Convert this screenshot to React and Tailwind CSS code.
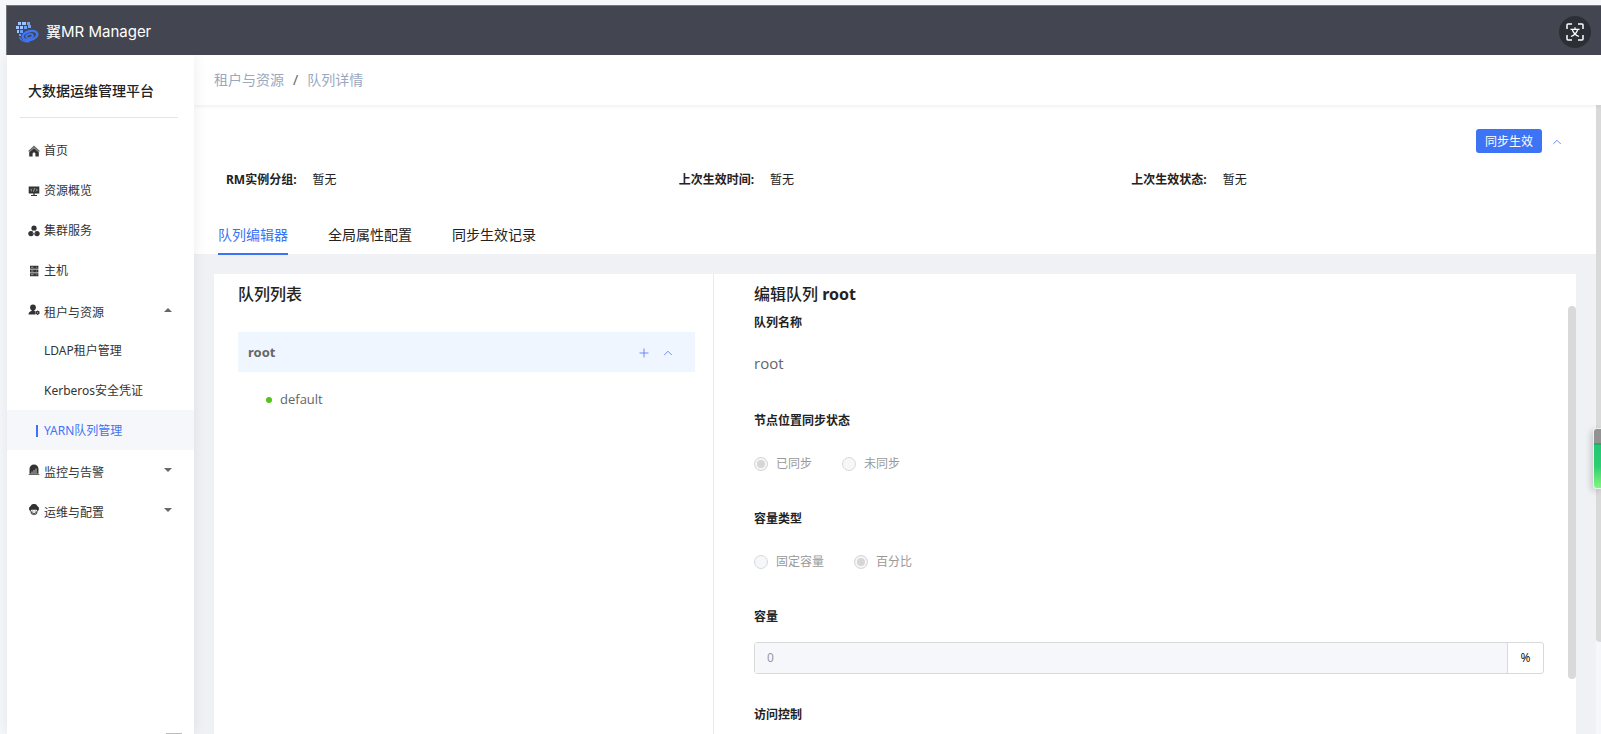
import { ChevronUp, Plus } from "lucide-react";

const navTop = [
  { label: "首页", icon: "home" },
  { label: "资源概览", icon: "monitor" },
  { label: "集群服务", icon: "cluster" },
  { label: "主机", icon: "host" },
];

const tenantItems = [
  { label: "LDAP租户管理" },
  { label: "Kerberos安全凭证" },
  { label: "YARN队列管理", active: true },
];

function NavIcon({ name }) {
  return (
    <svg viewBox="0 0 12 12" className="size-3 shrink-0 fill-[#333] text-white" aria-hidden="true">
      {name === "home" && (
        <>
          <path d="M6 .6 11.800 6l-.9.900L6 2.500 1.100 6.900.2 6z" opacity=".75" />
          <path d="M6 2.900 10.800 7.200V11.400H7.400V8.800a1.400 1.400 0 0 0-2.800 0v2.600H1.200V7.200z" />
        </>
      )}
      {name === "monitor" && (
        <>
          <path d="M.7 1.500h10.600v7H.7zM5.400 8.500h1.200v1.600H5.400zM3 10h6v1H3z" />
          <path d="M4 3.600 2.600 5 4 6.400M8 3.600 9.400 5 8 6.400M6.600 3.300 5.400 6.700" fill="none" stroke="currentColor" strokeWidth=".6" />
        </>
      )}
      {name === "cluster" && (
        <>
          <circle cx="6" cy="3.200" r="2.600" />
          <circle cx="3" cy="8.600" r="2.700" />
          <circle cx="9" cy="8.600" r="2.700" />
          <path d="M6 5v2.200L4.500 8.200M6 7.200l1.500 1" fill="none" stroke="currentColor" strokeWidth=".5" />
        </>
      )}
      {name === "host" && (
        <>
          <path d="M2 .8h8.400v3H2zM2 4.500h8.400v3H2zM2 8.200h8.400v3H2z" />
          <path d="M3 2.300h2.500M3 6h2.500M3 9.700h2.500" stroke="currentColor" strokeWidth=".5" />
          <path d="M8.300 2.300h.8M8.300 6h.8M8.300 9.700h.8" stroke="currentColor" strokeWidth=".6" />
        </>
      )}
      {name === "tenant" && (
        <>
          <circle cx="5" cy="3.400" r="2.900" />
          <path d="M.5 10.500c0-2.300 1.800-3.300 3.300-3.800V5.500h2.400v1.200l1.300.6v3.200z" />
          <path d="m9.600 6.600 1.900 1v2.200l-1.900 1.100-1.900-1.100V7.600z" />
          <circle cx="9.600" cy="8.700" r=".5" fill="currentColor" />
        </>
      )}
      {name === "alert" && (
        <>
          <path d="M1.500 9.700V5a4.500 4.500 0 0 1 9 0v4.700zM.7 10.200h10.600v.9H.7z" />
          <path d="M4 9.500V7.500M6 9.500V6M8 9.500V4.500" stroke="currentColor" strokeWidth=".9" opacity=".75" />
        </>
      )}
      {name === "ops" && (
        <>
          <path d="M2.600 7.200A2.700 2.700 0 0 1 2.400 2.300 3.900 3.900 0 0 1 9.600 2.300a2.700 2.700 0 0 1-.2 4.900L8.600 5.700H3.400z" />
          <path d="M3 7.200a3.100 3.100 0 0 0 6 0" fill="none" stroke="#333" strokeWidth="1" />
          <path d="M2.800 7.600a3.200 3.200 0 0 0 6.400 0" fill="none" stroke="#333" strokeWidth=".8" />
          <circle cx="4.800" cy="7" r=".5" />
          <circle cx="7.200" cy="7" r=".5" />
        </>
      )}
    </svg>
  );
}

function Logo() {
  return (
    <svg viewBox="0 0 24 22" className="h-[22px] w-6" aria-hidden="true">
      <path d="M3 1h3v3H3zM7 1h4v3H7zM1 5h3v3H1zM5 5h3v3H5zM2 9h2v3H2z" fill="#a3c4f8" />
      <path d="M9 5h3v3H9zM12 1h3v3h-3zM13 4h3v3h-3zM5 9h3v3H5zM4 13h2v2H4z" fill="#6f9ff5" />
      <g fill="none" stroke="#3f76f4">
        <ellipse cx="15" cy="14.500" rx="7.500" ry="4.400" strokeWidth="2.400" transform="rotate(-14 15 14.500)" />
        <ellipse cx="14.500" cy="15" rx="3.400" ry="1.900" strokeWidth="1.900" transform="rotate(-14 14.500 15)" />
        <path d="M4.500 16c1.200 3.600 5.500 5.200 10 4.600" strokeWidth="1.500" />
      </g>
    </svg>
  );
}

function NavGroup({ label, icon, open }) {
  return (
    <button type="button" aria-expanded={!!open} className="flex h-10 w-full items-center gap-1 pl-[21px] pr-[22px] text-left">
      <NavIcon name={icon} />
      <span className="flex-1 pt-[6px]">{label}</span>
      <svg viewBox="0 0 8 4" className="h-1 w-2 fill-[#666]" aria-hidden="true">
        {open ? <path d="M4 0 8 4H0z" /> : <path d="M0 0h8L4 4z" />}
      </svg>
    </button>
  );
}

function Sidebar() {
  return (
    <aside className="relative z-10 flex w-[187px] shrink-0 flex-col bg-white shadow-[0_0_14px_rgba(0,0,0,0.08)]">
      <h1 className="ml-[13px] mr-4 flex h-[63px] items-center border-b border-[#e2e2f0] pl-2 pt-[10px] text-sm font-medium text-[#222]">大数据运维管理平台</h1>
      <nav className="pt-3 text-xs text-[#333]">
        {navTop.map((item) => (
          <a key={item.label} href="#" className="flex h-10 items-center gap-1 pl-[21px] pt-[2px]">
            <NavIcon name={item.icon} />
            {item.label}
          </a>
        ))}
        <NavGroup label="租户与资源" icon="tenant" open />
        {tenantItems.map((item) =>
          item.active ? (
            <a key={item.label} href="#" aria-current="page" className="flex h-10 items-center gap-[6px] bg-[#f6f7fa] pl-[29px] pt-[2px] text-[#3d73f5]">
              <span className="h-3 w-[2px] bg-[#3d73f5]" />
              {item.label}
            </a>
          ) : (
            <a key={item.label} href="#" className="flex h-10 items-center pl-[37px] pt-[2px]">{item.label}</a>
          )
        )}
        <NavGroup label="监控与告警" icon="alert" />
        <NavGroup label="运维与配置" icon="ops" />
      </nav>
      <div className="mr-3 mt-auto h-px w-4 self-end bg-[#bbb]" />
    </aside>
  );
}

function Info({ label, value }) {
  return (
    <div className="flex gap-4">
      <dt className="font-bold">{label}:</dt>
      <dd>{value}</dd>
    </div>
  );
}

function Radio({ name, label, checked }) {
  return (
    <label className="flex items-center gap-2 text-[#999]">
      <input
        type="radio"
        name={name}
        defaultChecked={checked}
        disabled
        className="size-[14px] appearance-none rounded-full border border-[#d9d9d9] bg-[#f6f7fa] checked:bg-[#d6d6d6] checked:shadow-[inset_0_0_0_2px_#f6f7fa]"
      />
      {label}
    </label>
  );
}

function RadioField({ legend, name, options }) {
  return (
    <fieldset className="h-[98px]">
      <legend className="h-5 font-bold leading-5">{legend}</legend>
      <div className="flex h-10 items-center gap-[30px] pt-[26px]">
        {options.map((o) => (
          <Radio key={o.label} name={name} label={o.label} checked={o.checked} />
        ))}
      </div>
    </fieldset>
  );
}

function QueueList() {
  return (
    <section className="w-[500px] shrink-0 border-r border-[#ebebee] pl-6 pr-[18px] pt-2">
      <h2 className="text-base font-medium leading-6">队列列表</h2>
      <div className="mt-[26px] flex h-10 items-center bg-[#eff6ff] pl-[10px] pr-5 pt-px text-[#666]">
        <span className="flex-1 text-[13px] font-bold">root</span>
        <button type="button" aria-label="添加" className="mr-[10px] text-[#5b7cf7]"><Plus size={14} strokeWidth={1.500} /></button>
        <button type="button" aria-label="收起" className="text-[#5b7cf7]"><ChevronUp size={14} strokeWidth={1.500} /></button>
      </div>
      <div className="mt-2 flex h-10 items-center gap-2 pl-7 font-['Open_Sans'] text-[13px] text-[#666]">
        <span className="size-[6px] rounded-full bg-[#52c41a]" />
        default
      </div>
    </section>
  );
}

function QueueEditor() {
  return (
    <section className="relative min-w-0 flex-1 pl-10 pr-8 pt-2">
      <h2 className="text-base font-bold leading-6"><span className="font-medium">编辑队列</span> root</h2>
      <div className="h-[98px] pt-[7px]">
        <div className="font-bold leading-5">队列名称</div>
        <div className="pt-[18px] font-['Open_Sans'] text-[15px] leading-6 text-[#666]">root</div>
      </div>
      <div className="pt-[7px]">
        <RadioField legend="节点位置同步状态" name="sync" options={[{ label: "已同步", checked: true }, { label: "未同步" }]} />
        <RadioField legend="容量类型" name="type" options={[{ label: "固定容量" }, { label: "百分比", checked: true }]} />
        <div className="h-[98px]">
          <label htmlFor="capacity" className="block font-bold leading-5">容量</label>
          <div className="mt-[15px] flex h-8 rounded-[3px] border border-[#d9d9d9]">
            <input id="capacity" disabled defaultValue="0" className="min-w-0 flex-1 bg-[#f6f7fa] px-3 text-xs text-[#999]" />
            <span className="flex w-9 items-center justify-center border-l border-[#d9d9d9]">%</span>
          </div>
        </div>
        <div className="font-bold leading-5">访问控制</div>
      </div>
      <div className="absolute right-0 top-8 h-[373px] w-2 rounded-full bg-[#d9d9d9]" />
    </section>
  );
}

export default function App() {
  return (
    <div className="flex h-screen flex-col overflow-hidden bg-[#f6f7fb] pl-[6px] pt-[5px] font-['Noto_Sans','Noto_Sans_CJK_SC',sans-serif] text-xs text-[#222]">
      <header className="relative z-20 flex h-[50px] shrink-0 items-center border-l border-t border-[#6f777b] bg-[#434550] pl-2 pr-[10px] pt-[2px]">
        <Logo />
        <span className="flex-1 pl-[7px] font-[Inter,'Noto_Sans_CJK_SC',sans-serif] text-[15px] text-white">翼MR Manager</span>
        <button type="button" aria-label="翻译" className="flex size-8 items-center justify-center rounded-full bg-[#2d2f36]">
          <svg viewBox="0 0 18 18" className="size-[18px] fill-none stroke-white" strokeWidth="1.500" aria-hidden="true">
            <path d="M1 6V2q0-1 1-1h4M12 1h4q1 0 1 1v4M17 12v4q0 1-1 1h-4M6 17H2q-1 0-1-1v-4" />
            <path d="M4.500 6.300h9M9 4.200v2M6.300 6.500c.8 3 3.200 5.800 6.700 7M11.700 6.500c-.8 3-3.200 5.800-6.700 7" strokeWidth="1.200" />
          </svg>
        </button>
      </header>
      <div className="flex min-h-0 flex-1 pl-px">
        <Sidebar />
        <div className="flex min-w-0 flex-1 flex-col">
          <div className="z-[5] flex h-[50px] shrink-0 items-center gap-[9px] bg-white pl-5 text-sm text-[#9aa8bf] shadow-[0_1px_4px_rgba(0,0,0,0.08)]">
            <a href="#">租户与资源</a>
            <span className="text-[#666]">/</span>
            <a href="#">队列详情</a>
          </div>
          <div className="flex min-h-0 flex-1">
            <main className="flex min-w-0 flex-1 flex-col bg-[#f0f1f5]">
              <div className="bg-white pl-5 pr-5 pt-6">
                <div className="flex items-center justify-end gap-2 pr-3">
                  <button type="button" className="h-6 rounded-[3px] bg-[#3d73f5] px-[9px] pt-[2px] text-white">同步生效</button>
                  <button type="button" aria-label="收起" className="pt-[2px] text-[#5b7cf7]"><ChevronUp size={14} strokeWidth={1.500} /></button>
                </div>
                <dl className="-mr-2 mt-[17px] grid grid-cols-3 pl-3 leading-5">
                  <Info label="RM实例分组" value="暂无" />
                  <Info label="上次生效时间" value="暂无" />
                  <Info label="上次生效状态" value="暂无" />
                </dl>
                <div role="tablist" className="mt-6 flex h-10 gap-10 pl-1 text-sm">
                  <button type="button" role="tab" aria-selected="true" className="-mb-px border-b-2 border-[#3d73f5] pt-[2px] text-[#3d73f5]">队列编辑器</button>
                  <button type="button" role="tab" aria-selected="false" className="-mb-px border-b-2 border-transparent pt-[2px]">全局属性配置</button>
                  <button type="button" role="tab" aria-selected="false" className="-mb-px border-b-2 border-transparent pt-[2px]">同步生效记录</button>
                </div>
              </div>
              <div className="mx-5 mt-5 flex flex-1 bg-white">
                <QueueList />
                <QueueEditor />
              </div>
            </main>
            <div className="relative w-[5px] shrink-0">
              <div className="h-[537px] rounded-bl bg-[#d9d9d9]" />
              <div className="absolute -left-[3px] top-[323px] flex h-[61px] w-[8px] flex-col overflow-hidden rounded-l-[4px] border border-r-0 border-[#e8f3ec] shadow-[-2px_2px_6px_rgba(0,0,0,0.18)]">
                <div className="h-[14px] bg-[#929292]" />
                <div className="h-[2px] bg-[#1fae63]" />
                <div className="flex-1 bg-gradient-to-b from-[#22c774] via-[#2bce70] to-[#80f780]" />
              </div>
            </div>
          </div>
        </div>
      </div>
    </div>
  );
}
